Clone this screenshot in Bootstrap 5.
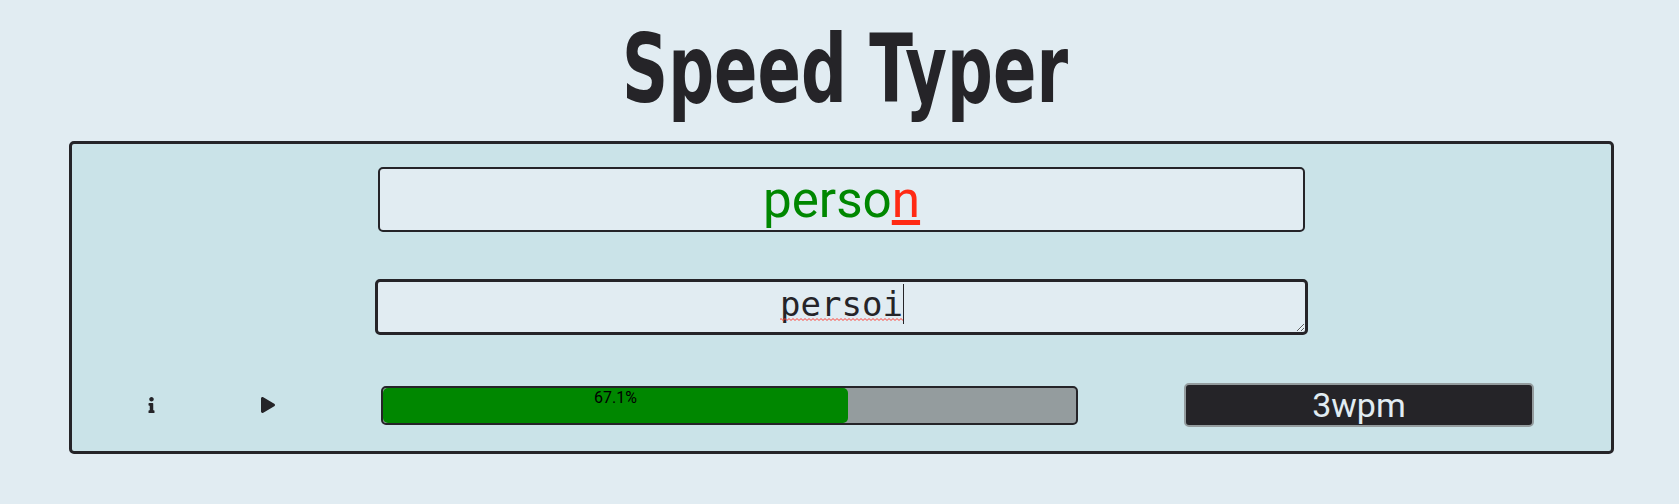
<!DOCTYPE html>
<html lang="en">
<head>
<meta charset="utf-8">
<title>Speed Typer</title>
<link href="https://cdn.jsdelivr.net/npm/bootstrap@5.3.0/dist/css/bootstrap.min.css" rel="stylesheet">
<style>
  :root { --ink: #252428; --paper: #e1ecf2; --pool: #cae3e8; --ash: #949c9e; --good: #008700; --bad: #ff2a14; }
  body { background: var(--paper); color: var(--ink); font-family: Roboto, sans-serif; line-height: normal; overflow: hidden; }
  .game-title { height: 141px; }
  .game-title text { font: 700 94.5px "DejaVu Sans", sans-serif; fill: var(--ink); }
  .board { width: 1545px; height: 313px; margin-left: 69px; padding-top: 23px; border: 3px solid var(--ink); border-radius: 5px; background: var(--pool); }
  .target-word { width: 927px; height: 65px; border: 2px solid var(--ink); border-radius: 5px; background: var(--paper); font-size: 51.2px; line-height: 61px; }
  .typed { color: var(--good); }
  .current { color: var(--bad); text-decoration: underline; }
  .entry { width: 933px; height: 56px; margin-top: 47px; padding: 2px; border: 3px solid var(--ink); border-radius: 5px; background: var(--paper); font: 34px "DejaVu Sans Mono", monospace; overflow: hidden; resize: vertical; }
  .entry-text { height: 40px; line-height: 40px; }
  .caret { top: 0; right: -1px; width: 1px; height: 40px; background: var(--ink); }
  .squiggle { left: 0; top: 34px; }
  .controls { height: 44px; margin-top: 48px; padding-left: 76px; }
  .control-icon { height: 16px; fill: var(--ink); }
  .info-slot { width: 7px; margin-right: 106px; }
  .play-slot { width: 14px; margin-right: 106px; }
  .meter { width: 697px; height: 39px; border: 2px solid var(--ink); border-radius: 5px; background: var(--ash); font-size: 16px; }
  .meter-fill { height: 100%; border-radius: 5px; background: var(--good); color: #000; }
  .speed { width: 350px; height: 44px; margin-left: 106px; border: 2px solid var(--ash); border-radius: 5px; background: var(--ink); color: var(--paper); font-size: 34px; line-height: 40px; padding: 0; }
</style>
</head>
<body>
<h1 class="game-title m-0">
  <svg class="d-block" width="1679" height="141" role="img">
    <text x="622" y="102" textLength="446" lengthAdjust="spacingAndGlyphs">Speed Typer</text>
  </svg>
</h1>
<main class="board d-flex flex-column align-items-center">
  <div class="target-word text-center"><span class="typed">perso</span><span class="current">n</span></div>
  <div class="entry text-center">
    <span class="entry-text d-inline-block position-relative">persoi<span class="caret position-absolute"></span><svg class="squiggle position-absolute" width="123" height="3"><defs><pattern id="wave" width="4" height="3" patternUnits="userSpaceOnUse"><path d="M-1 2.5L1 .5L3 2.5L5 .5" fill="none" stroke="#ff3b30" stroke-width="1"/></pattern></defs><rect width="123" height="3" fill="url(#wave)"/></svg></span>
  </div>
  <div class="controls w-100 d-flex align-items-center">
    <div class="info-slot d-flex"><svg class="control-icon" width="7" viewBox="0 0 192 512"><path d="M20 424.229h20V279.771H20c-11.046 0-20-8.954-20-20V212c0-11.046 8.954-20 20-20h112c11.046 0 20 8.954 20 20v212.229h20c11.046 0 20 8.954 20 20V492c0 11.046-8.954 20-20 20H20c-11.046 0-20-8.954-20-20v-47.771c0-11.046 8.954-20 20-20zM96 0C56.235 0 24 32.235 24 72s32.235 72 72 72 72-32.235 72-72S135.764 0 96 0z"/></svg></div>
    <div class="play-slot d-flex"><svg class="control-icon" width="14" viewBox="0 0 448 512"><path d="M424.4 214.7L72.4 6.6C43.8-10.3 0 6.1 0 47.9V464c0 37.5 40.7 60.1 72.4 41.3l352-208c31.4-18.5 31.5-64.1 0-82.6z"/></svg></div>
    <div class="meter"><div class="meter-fill text-center" style="width:67.1%">67.1%</div></div>
    <button class="speed" type="button">3wpm</button>
  </div>
</main>
<script src="https://cdn.jsdelivr.net/npm/bootstrap@5.3.0/dist/js/bootstrap.bundle.min.js"></script>
</body>
</html>
